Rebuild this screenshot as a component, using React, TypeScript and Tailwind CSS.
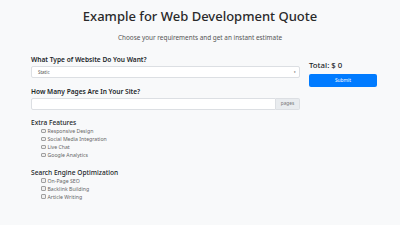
import React from "react";

const features = ["Responsive Design", "Social Media Integration", "Live Chat", "Google Analytics"];
const seo = ["On-Page SEO", "Backlink Building", "Article Writing"];

function Check({ label }: { label: string }) {
  return (
    <div className="flex items-center h-[8px] pl-[10px]">
      <span className="w-[4.5px] h-[4.5px] border-[0.6px] border-[#a0a0a0] rounded-[1px] bg-[#eeeeee] mr-[2px]" />
      <span className="text-[5.2px] leading-[8px] text-[#666]">{label}</span>
    </div>
  );
}

export default function App() {
  return (
    <div className="w-[400px] h-[225px] bg-[#f8f9fa] text-[#212529] font-['Noto_Sans',sans-serif] overflow-hidden">
      <h1 className="pt-[8px] text-center text-[13px] leading-[16px] font-medium text-[#2a2a2a]">
        Example for Web Development Quote
      </h1>
      <p className="mt-[9px] text-center text-[6.4px] leading-[9px] text-[#555]">
        Choose your requirements and get an instant estimate
      </p>
      <div className="flex pl-[31px] mt-[13px]">
        <div className="w-[269px]">
          <div className="text-[6.6px] leading-[9px] font-semibold">What Type of Website Do You Want?</div>
          <div className="mt-[2px] h-[12px] border-[0.6px] border-[#dcdfe3] rounded-[2px] bg-white flex items-center justify-between pl-[6px] pr-[3px]">
            <span className="text-[4.5px] text-[#555]">Static</span>
            <span className="text-[3px] text-[#444]">▾</span>
          </div>
          <div className="mt-[9px] text-[6.6px] leading-[9px] font-semibold">How Many Pages Are In Your Site?</div>
          <div className="mt-[2px] h-[12px] flex">
            <div className="flex-1 border-[0.6px] border-[#dcdfe3] rounded-l-[2px] bg-white" />
            <div className="w-[24px] border-[0.6px] border-l-0 border-[#dcdfe3] rounded-r-[2px] bg-[#e9ecef] flex items-center justify-center text-[4.8px] text-[#777]">
              pages
            </div>
          </div>
          <div className="mt-[9px] text-[6.6px] leading-[8px] font-medium">Extra Features</div>
          <div className="flex flex-col">
            {features.map((f) => (
              <Check key={f} label={f} />
            ))}
          </div>
          <div className="mt-[9.5px] text-[6.6px] leading-[8px] font-medium">Search Engine Optimization</div>
          <div className="flex flex-col">
            {seo.map((f) => (
              <Check key={f} label={f} />
            ))}
          </div>
        </div>
        <div className="ml-[9px] w-[68px] pt-[5px]">
          <div className="text-[7.8px] leading-[10px] font-medium">Total: $ 0</div>
          <button className="mt-[4px] w-[68px] h-[13px] rounded-[2px] bg-[#007bff] text-white text-[4.8px] flex items-center justify-center">
            Submit
          </button>
        </div>
      </div>
    </div>
  );
}
